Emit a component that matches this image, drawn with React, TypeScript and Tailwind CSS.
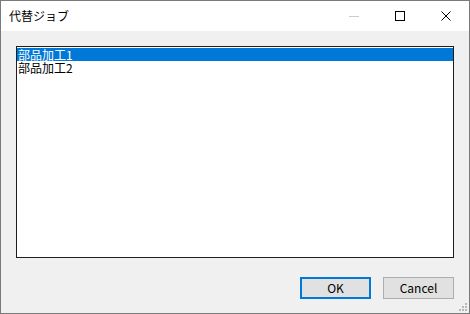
import React from "react";

const jobs = ["部品加工1", "部品加工2"];

const App = () => {
  return (
    <div
      className="relative w-[470px] h-[314px] flex flex-col border border-[#7a7a7a] bg-[#f0f0f0] overflow-hidden"
      style={{ fontFamily: '"Noto Sans CJK JP", "Liberation Sans", sans-serif' }}
    >
      {/* Title bar */}
      <div className="h-[30px] bg-white flex items-center shrink-0">
        <div className="pl-[8px] text-[12px] text-black leading-none flex-1">代替ジョブ</div>
        <div className="flex h-full">
          <div className="w-[46px] h-full flex items-center justify-center">
            <div className="w-[10px] h-px bg-[#cccccc]" />
          </div>
          <div className="w-[46px] h-full flex items-center justify-center">
            <div className="w-[10px] h-[10px] border border-black" />
          </div>
          <div className="w-[46px] h-full flex items-center justify-center">
            <svg width="10" height="10" viewBox="0 0 10 10">
              <path d="M0.5 0.5 L9.5 9.5 M9.5 0.5 L0.5 9.5" stroke="#000" strokeWidth="1" fill="none" />
            </svg>
          </div>
        </div>
      </div>

      {/* Client area */}
      <div className="flex-1 flex flex-col pt-[15px] pl-[15px] pr-[15px]">
        <div className="w-[438px] h-[212px] bg-white border border-[#1e1e1e] pt-px">
          {jobs.map((job, i) => (
            <div
              key={job}
              className={
                "h-[13px] leading-[13px] text-[12px] pl-[1px] " +
                (i === 0 ? "bg-[#0078d7] text-white" : "text-black")
              }
            >
              {job}
            </div>
          ))}
        </div>

        <div className="flex justify-end gap-[12px] mt-[19px]">
          <button className="w-[71px] h-[22px] bg-[#e1e1e1] border-2 border-[#0078d7] text-[12px] text-black leading-none flex items-center justify-center">
            OK
          </button>
          <button className="w-[71px] h-[22px] bg-[#e1e1e1] border border-[#adadad] text-[12px] text-black leading-none flex items-center justify-center">
            Cancel
          </button>
        </div>
      </div>

      {/* Size grip */}
      <svg className="absolute right-[1px] bottom-[1px]" width="10" height="10" viewBox="0 0 10 10">
        <g fill="#b8b8b8">
          <rect x="7" y="1" width="2" height="2" />
          <rect x="4" y="4" width="2" height="2" />
          <rect x="7" y="4" width="2" height="2" />
          <rect x="1" y="7" width="2" height="2" />
          <rect x="4" y="7" width="2" height="2" />
          <rect x="7" y="7" width="2" height="2" />
        </g>
      </svg>
    </div>
  );
};

export default App;
